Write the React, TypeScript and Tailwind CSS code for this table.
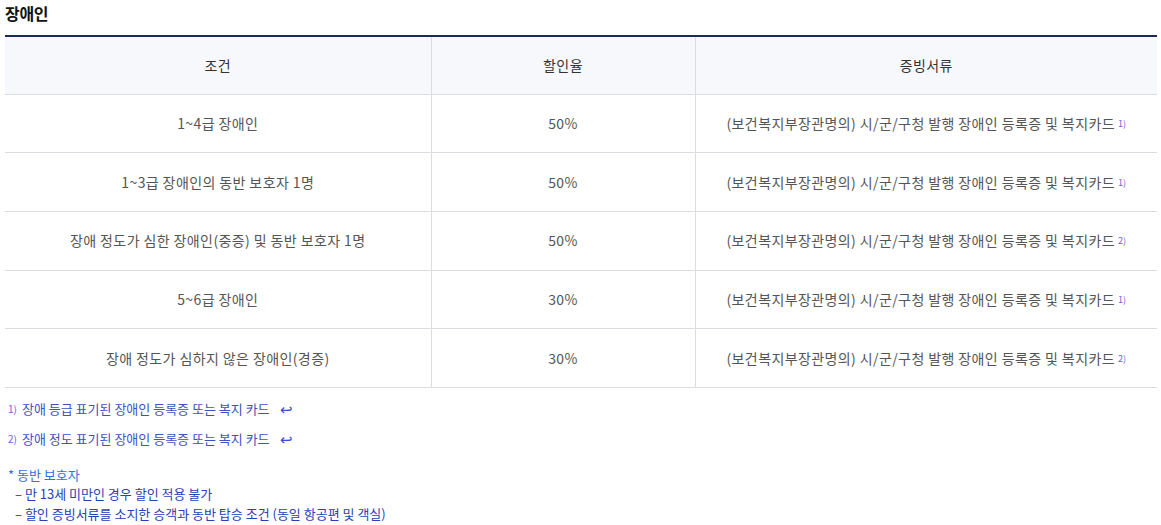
import React from "react";

const rows = [
  { c: "1~4급 장애인", r: "50%", n: "1)" },
  { c: "1~3급 장애인의 동반 보호자 1명", r: "50%", n: "1)" },
  { c: "장애 정도가 심한 장애인(중증) 및 동반 보호자 1명", r: "50%", n: "2)" },
  { c: "5~6급 장애인", r: "30%", n: "1)" },
  { c: "장애 정도가 심하지 않은 장애인(경증)", r: "30%", n: "2)" },
];

export default function App() {
  return (
    <div
      className="bg-white w-[1161px] h-[525px] overflow-hidden px-[5px]"
      style={{ fontFamily: '"Noto Sans CJK KR", "Noto Sans", sans-serif' }}
    >
      <h2 className="text-[16px] font-bold text-[#111] leading-[24px] pt-px h-[35px] tracking-[-0.3px]">장애인</h2>
      <table className="w-[1152px] border-collapse border-t-2 border-t-[#1b2a57] table-fixed text-[14px] tracking-[0.4px]">
        <colgroup>
          <col className="w-[426px]" />
          <col className="w-[264px]" />
          <col className="w-[462px]" />
        </colgroup>
        <thead>
          <tr className="bg-[#f7f8fc] h-[58.4px] border-b border-[#dcdde2]">
            <th className="font-normal text-[#333] text-center">조건</th>
            <th className="font-normal text-[#333] text-center border-l border-[#dcdde2]">할인율</th>
            <th className="font-normal text-[#333] text-center border-l border-[#dcdde2]">증빙서류</th>
          </tr>
        </thead>
        <tbody>
          {rows.map((row, i) => (
            <tr key={i} className="h-[58.6px] border-b border-[#dcdde2]">
              <td className="text-center text-[#555]">{row.c}</td>
              <td className="text-center text-[#555] border-l border-[#dcdde2]">{row.r}</td>
              <td className="text-center text-[#555] border-l border-[#dcdde2]">
                (보건복지부장관명의) 시/군/구청 발행 장애인 등록증 및 복지카드
                <sup className="text-[9px] text-[#6f62d8] ml-[3px] relative top-[-2px] tracking-normal">{row.n}</sup>
              </td>
            </tr>
          ))}
        </tbody>
      </table>
      <div className="pt-[6px] text-[13px] text-[#3f4fc6]">
        <div className="h-[30px] flex items-center">
          <span className="text-[10px] text-[#6f62d8] mr-[5px] ml-[3px]">1)</span>
          장애 등급 표기된 장애인 등록증 또는 복지 카드
          <span className="ml-[10px] text-[15px] text-[#3f4fc6]">↩</span>
        </div>
        <div className="h-[30px] flex items-center">
          <span className="text-[10px] text-[#6f62d8] mr-[5px] ml-[3px]">2)</span>
          장애 정도 표기된 장애인 등록증 또는 복지 카드
          <span className="ml-[10px] text-[15px] text-[#3f4fc6]">↩</span>
        </div>
        <div className="mt-[11px] leading-[19.5px]">
          <div className="text-[#2f6fe4] ml-[3px]">* 동반 보호자</div>
          <div className="text-[#2a40b8] ml-[10px]">– 만 13세 미만인 경우 할인 적용 불가</div>
          <div className="text-[#2a40b8] ml-[10px]">– 할인 증빙서류를 소지한 승객과 동반 탑승 조건 (동일 항공편 및 객실)</div>
        </div>
      </div>
    </div>
  );
}
